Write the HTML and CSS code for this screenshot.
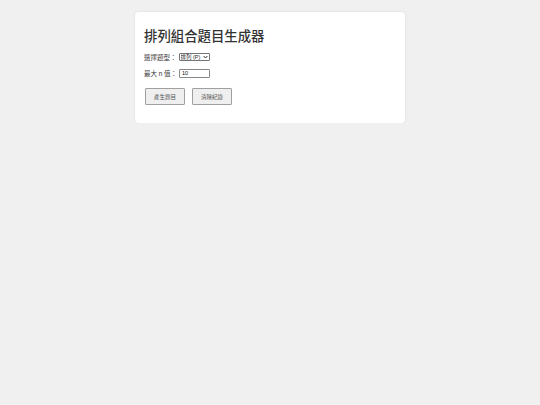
FILE: index.html
```html
<!DOCTYPE html>
<html lang="zh-Hant">
<head>
<meta charset="utf-8">
<title>排列組合題目生成器</title>
<link rel="stylesheet" href="styles.css">
</head>
<body>
<div class="card">
  <h1 class="title">排列組合題目生成器</h1>
  <div class="row">
    <label class="label" for="type">選擇題型：</label>
    <span class="select-wrap">
      <select id="type" class="select">
        <option>排列 (P)</option>
        <option>組合 (C)</option>
      </select>
      <svg class="chev" viewBox="0 0 8 5" width="5" height="4" aria-hidden="true"><path d="M1 1 L4 4 L7 1" fill="none" stroke="#222" stroke-width="1.6"/></svg>
    </span>
  </div>
  <div class="row">
    <label class="label" for="maxn">最大 n 值：</label>
    <input id="maxn" class="input" type="text" value="10">
  </div>
  <div class="buttons">
    <button class="btn">產生題目</button>
    <button class="btn">清除紀錄</button>
  </div>
  <div class="output"></div>
</div>
</body>
</html>
```

FILE: styles.css
```css
html, body {
  margin: 0;
  padding: 0;
}
body {
  background: #f0f0f0;
  font-family: "Liberation Sans", "Noto Sans CJK TC", sans-serif;
  color: #333;
  padding-top: 12px;
}
.card {
  box-sizing: border-box;
  width: 270px;
  margin: 0 auto;
  background: #fff;
  border-radius: 4px;
  box-shadow: 0 0 3px rgba(0, 0, 0, 0.08);
  padding: 13px 9px 18px 9px;
}
.title {
  margin: 0 0 7px 0;
  font-family: "Noto Sans CJK TC", sans-serif;
  font-size: 13.4px;
  line-height: 20px;
  font-weight: 500;
  color: #333;
}
.row {
  display: flex;
  align-items: center;
  height: 10px;
  margin-bottom: 6px;
  font-size: 6.5px;
  color: #3a3a3a;
}
.label {
  margin-right: 2px;
  font-family: "Noto Sans CJK TC", sans-serif;
}
.select-wrap {
  position: relative;
  display: inline-flex;
}
.select {
  -webkit-appearance: none;
  appearance: none;
  box-sizing: border-box;
  height: 8px;
  width: 31px;
  padding: 0 6px 0 1px;
  font-size: 5.5px;
  line-height: 6px;
  font-family: "Liberation Sans", "Noto Sans CJK TC", sans-serif;
  border: 1px solid #767676;
  border-radius: 1px;
  background: #fff;
  color: #222;
}
.chev {
  position: absolute;
  right: 1.5px;
  top: 2px;
  pointer-events: none;
}
.input {
  box-sizing: border-box;
  height: 9px;
  width: 31px;
  padding: 0 2px;
  font-size: 5.5px;
  font-family: "Liberation Sans", sans-serif;
  border: 1px solid #888;
  border-radius: 1px;
  color: #111;
}
.buttons {
  display: flex;
  gap: 7px;
  margin-top: 10px;
  padding-left: 1px;
}
.btn {
  box-sizing: border-box;
  width: 40px;
  height: 17px;
  padding: 0;
  font-size: 5.5px;
  font-family: "Noto Sans CJK TC", sans-serif;
  color: #555;
  background: #efefef;
  border: 1px solid #a0a0a0;
  border-radius: 1px;
}
.output {
  height: 0;
}
```
